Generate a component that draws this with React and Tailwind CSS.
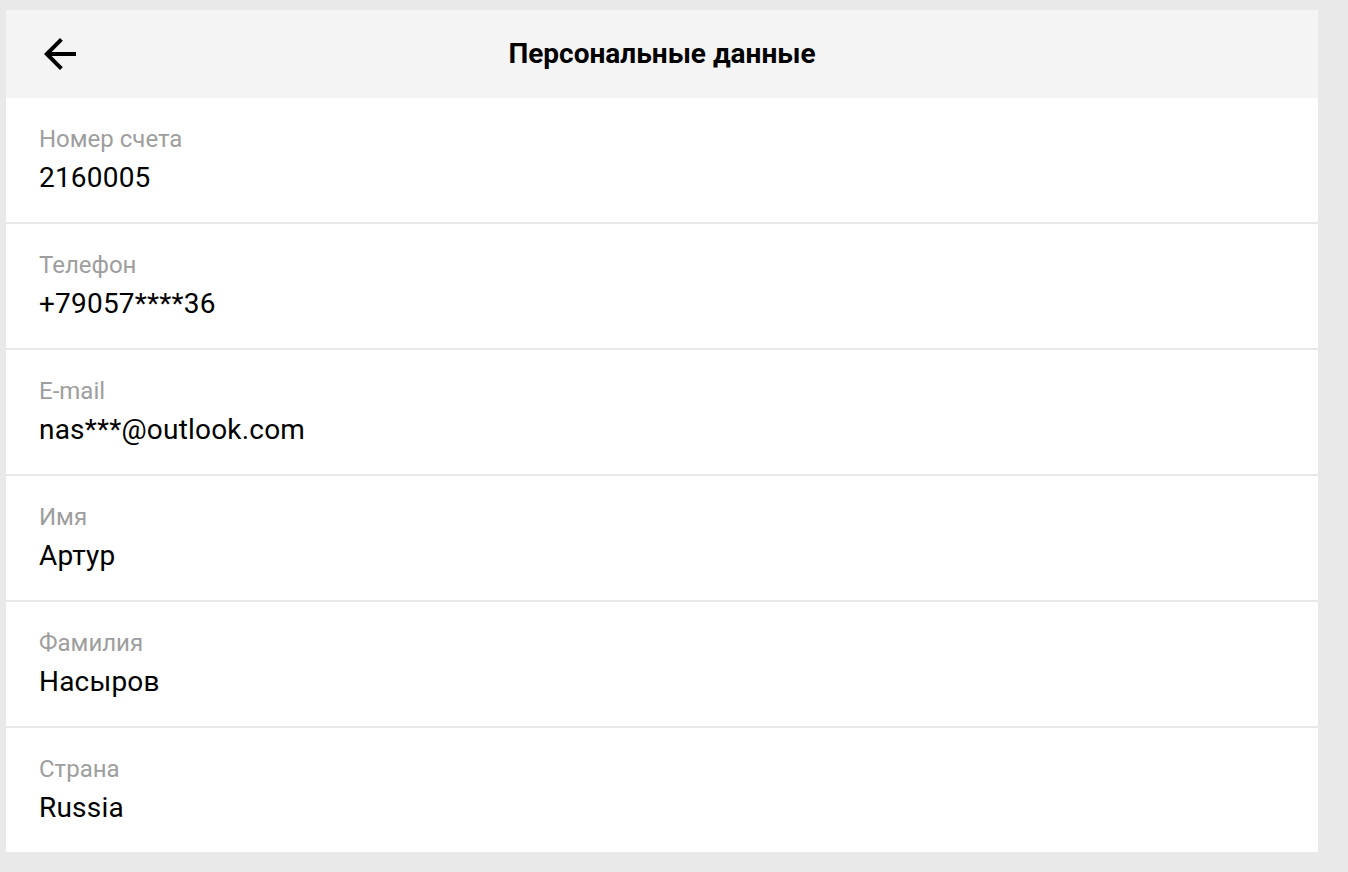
const fields = [
  { label: 'Номер счета', value: '2160005' },
  { label: 'Телефон', value: '+79057****36' },
  { label: 'E-mail', value: 'nas***@outlook.com' },
  { label: 'Имя', value: 'Артур' },
  { label: 'Фамилия', value: 'Насыров' },
  { label: 'Страна', value: 'Russia' },
];

function BackArrow() {
  return (
    <svg width="48" height="48" viewBox="0 0 24 24" fill="currentColor">
      <path d="M20 11H7.83l5.59-5.59L12 4l-8 8 8 8 1.41-1.41L7.83 13H20v-2z" />
    </svg>
  );
}

export default function App() {
  return (
    <div className="min-h-screen bg-[#e9e9e9] pt-[10px] pl-[6px] font-['Roboto',sans-serif]">
      <div className="w-[1312px] bg-white">
        <header className="relative flex h-[88px] items-center justify-center bg-[#f4f4f4]">
          <button className="absolute left-[30px] top-[20px] text-black">
            <BackArrow />
          </button>
          <h1 className="text-[28px] font-bold text-black">Персональные данные</h1>
        </header>
        {fields.map((f, i) => (
          <div
            key={f.label}
            className={`px-[33px] pt-[25px] pb-[26px] ${i < fields.length - 1 ? 'border-b-2 border-[#e8e8e8]' : ''}`}
          >
            <p className="text-[24px] leading-[32px] text-[#9e9e9e]">{f.label}</p>
            <p className="mt-[5px] text-[28px] leading-[36px] tracking-[0.2px] text-black">{f.value}</p>
          </div>
        ))}
      </div>
    </div>
  );
}
